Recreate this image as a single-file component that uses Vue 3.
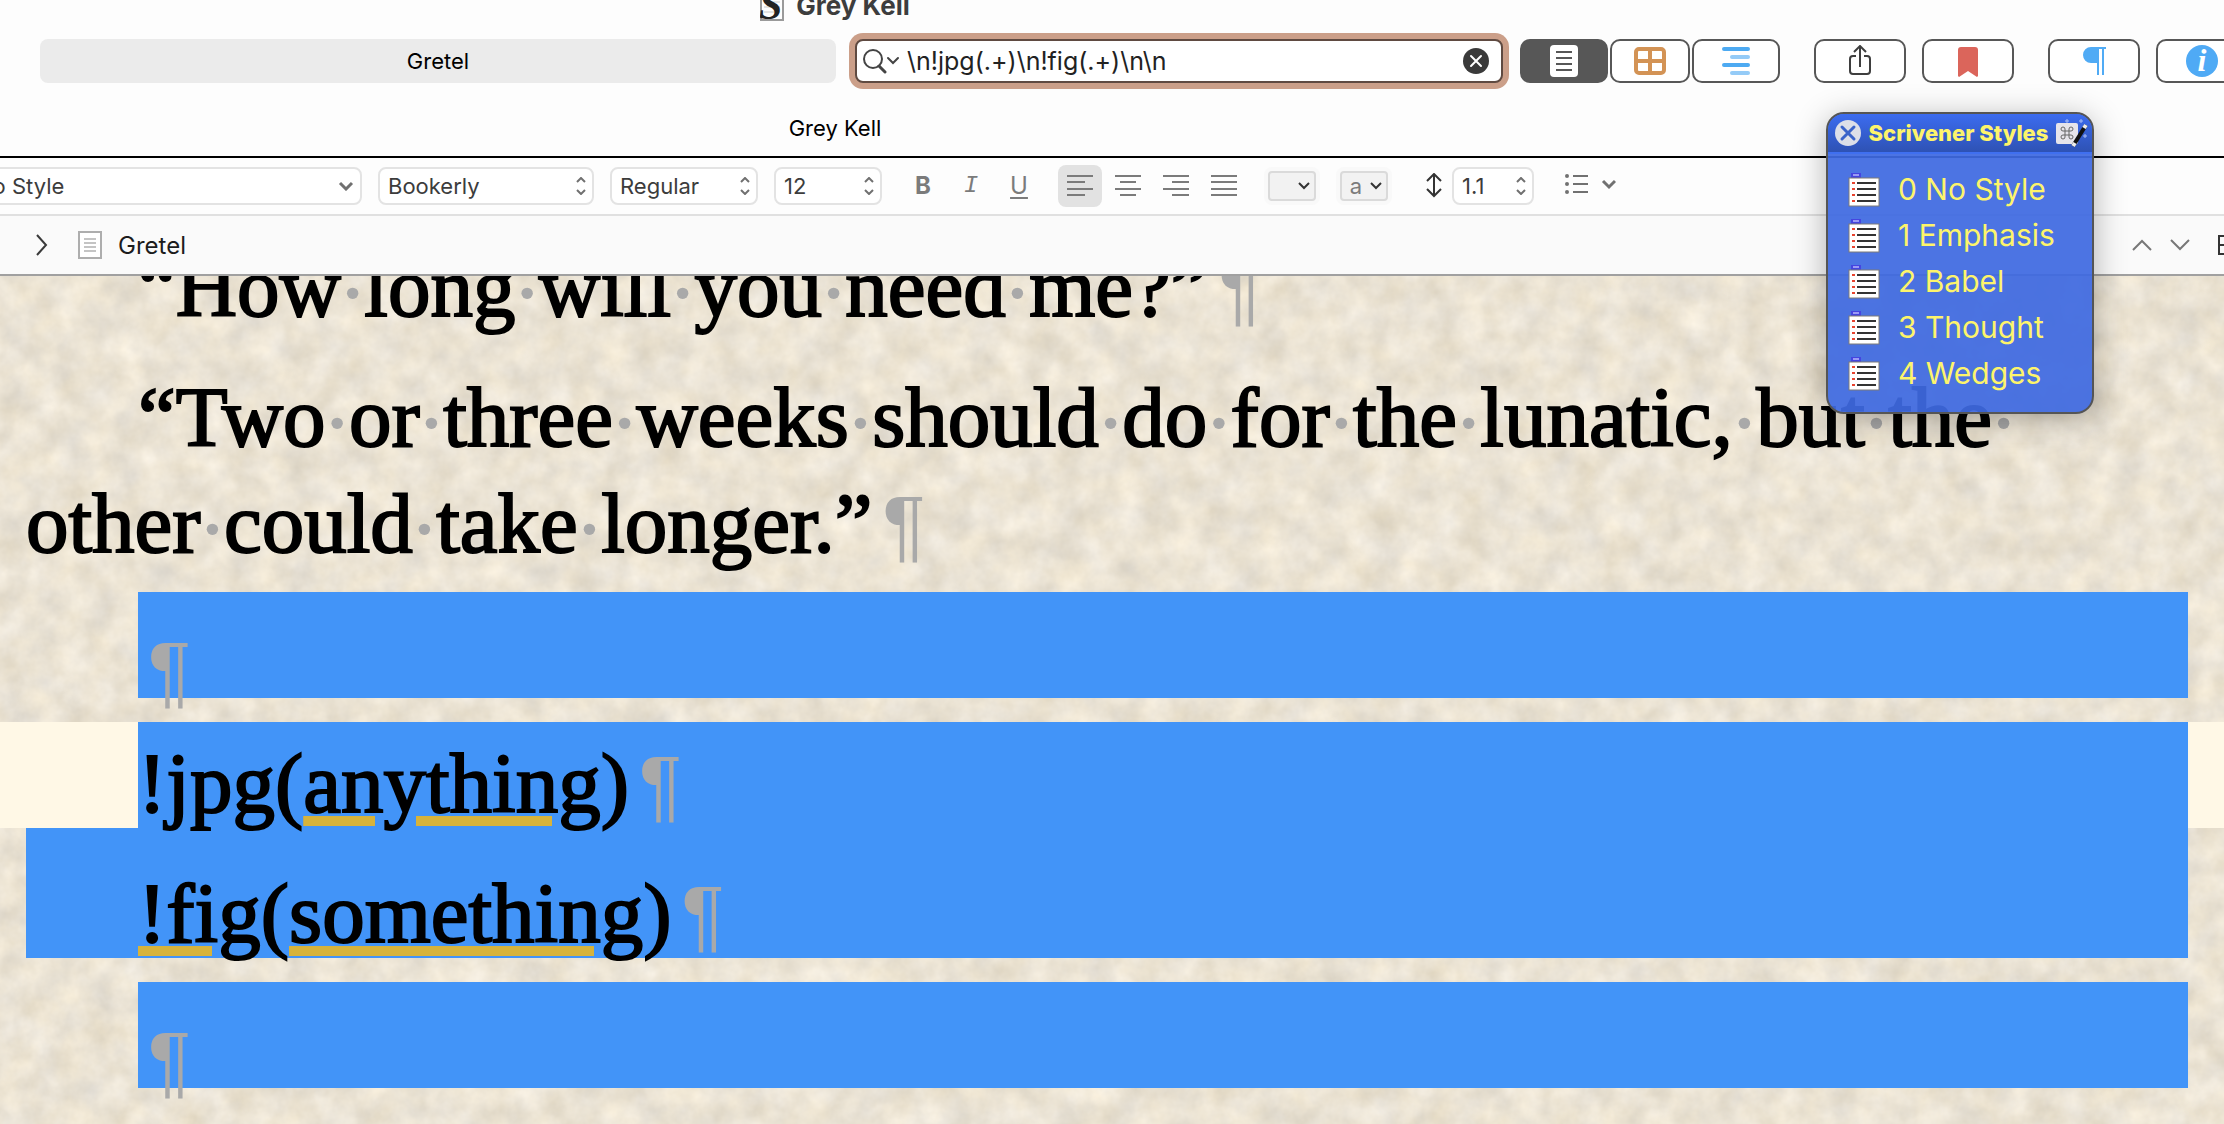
<template>
  <div class="window">
    <header class="title-bar">
      <svg class="app-icon" viewBox="0 0 24 32" aria-hidden="true">
        <rect x="1" y="1" width="22" height="30" fill="#fdfdfd" stroke="#9a9a9a" stroke-width="2" />
        <path d="M4 8h16M4 13h16M4 18h16M4 23h16" stroke="#c9c9c9" />
        <text x="-1" y="30" class="app-letter">S</text>
      </svg>
      <h1>Grey Kell</h1>
    </header>

    <div class="toolbar">
      <button class="tab">Gretel</button>
      <div class="search">
        <label for="search" aria-label="Search">
          <svg width="38" height="26" viewBox="0 0 38 26" fill="none" stroke="#444" stroke-linecap="round">
            <circle cx="10" cy="11" r="9" stroke-width="2" />
            <path d="M16 18l6 6" stroke-width="3" />
            <path d="M25 10l5 5 5-5" stroke-width="2" />
          </svg>
        </label>
        <input id="search" v-model="query" type="text" spellcheck="false" />
        <button class="clear" aria-label="Clear search" @click="query = ''">
          <svg width="26" height="26" viewBox="0 0 26 26">
            <circle cx="13" cy="13" r="13" fill="#3a3a3a" />
            <path d="M8 8l10 10M18 8L8 18" stroke="#fff" stroke-width="2" stroke-linecap="round" />
          </svg>
        </button>
      </div>
      <div class="segments">
        <button
          class="tool"
          :class="{ active: view === 'document' }"
          aria-label="Document view"
          @click="view = 'document'"
        >
          <svg width="32" height="32" viewBox="0 0 32 32">
            <rect x="2" width="28" height="32" rx="4" fill="#fff" />
            <path d="M8 7h16M8 13h16M8 19h16M8 25h16" stroke="#575757" stroke-width="2" />
          </svg>
        </button>
        <button
          class="tool narrow"
          :class="{ active: view === 'corkboard' }"
          aria-label="Corkboard"
          @click="view = 'corkboard'"
        >
          <svg width="32" height="32" viewBox="0 0 32 32" fill="none" stroke="#d39355" stroke-width="4">
            <rect x="2" y="4" width="28" height="24" rx="3" />
            <path d="M16 4v24M2 16h28" />
          </svg>
        </button>
        <button
          class="tool"
          :class="{ active: view === 'outliner' }"
          aria-label="Outliner"
          @click="view = 'outliner'"
        >
          <svg width="32" height="32" viewBox="0 0 32 32" stroke-width="4" stroke-linecap="round">
            <path d="M4 4h24M4 20h24" stroke="#4daaf2" />
            <path d="M12 12h16M12 28h16" stroke="#94cbf7" />
          </svg>
        </button>
      </div>
      <div class="tool-pair">
        <button class="tool wide" aria-label="Share">
          <svg width="32" height="32" viewBox="0 0 32 32" fill="none" stroke="#3e3e3e" stroke-width="2">
            <path d="M12 11H9q-3 0-3 3v12q0 3 3 3h14q3 0 3-3V14q0-3-3-3h-3" />
            <path d="M16 22V1M10 7l6-6 6 6" />
          </svg>
        </button>
        <button class="tool wide" aria-label="Bookmarks">
          <svg width="32" height="32" viewBox="0 0 32 32">
            <path d="M6 5q0-3 3-3h14q3 0 3 3v26l-1 1-9-6-9 6-1-1z" fill="#db655b" />
          </svg>
        </button>
      </div>
      <div class="tool-pair">
        <button class="tool wide" aria-label="Show invisibles">
          <svg width="32" height="32" viewBox="0 0 32 32">
            <path d="M13 2h15v2h-2v26h-2V4h-3v26h-2V18h-6a8 8 0 0 1 0-16z" fill="#50abf5" />
          </svg>
        </button>
        <button class="tool wide" aria-label="Inspector">
          <svg width="32" height="32" viewBox="0 0 32 32">
            <circle cx="16" cy="16" r="16" fill="#4faaf5" />
            <text x="16" y="26" class="info-letter">i</text>
          </svg>
        </button>
      </div>
    </div>

    <div class="project-title">Grey Kell</div>

    <div class="format-bar">
      <div class="pick style-pick">
        <select v-model="style" aria-label="Paragraph style">
          <option v-for="item in styles" :key="item.key">{{ item.name }}</option>
        </select>
        <svg width="16" height="10" viewBox="0 0 16 10"><path d="M2 2l6 6 6-6" /></svg>
      </div>
      <div v-for="pick in fontPicks" :key="pick.label" class="pick" :class="pick.size">
        <select :aria-label="pick.label">
          <option>{{ pick.value }}</option>
        </select>
        <svg width="10" height="18" viewBox="0 0 10 18"><path d="M1 5l4-4 4 4M1 13l4 4 4-4" /></svg>
      </div>

      <div class="letters">
        <button class="letter bold" aria-label="Bold">B</button>
        <button class="letter italic" aria-label="Italic">I</button>
        <button class="letter underline" aria-label="Underline">U</button>
      </div>

      <div class="aligns">
        <button
          v-for="item in aligns"
          :key="item.name"
          class="align"
          :class="{ active: align === item.name }"
          :aria-label="item.name"
          @click="align = item.name"
        >
          <svg width="26" height="24" viewBox="0 0 26 24">
            <path :d="item.path" stroke="#7b7b7b" stroke-width="2" />
          </svg>
        </button>
      </div>

      <div class="wells">
        <button class="well" aria-label="Text color">
          <svg width="12" height="8" viewBox="0 0 12 8"><path d="M1 1l5 5 5-5" /></svg>
        </button>
        <button class="well" aria-label="Highlight color">
          <span>a</span>
          <svg width="12" height="8" viewBox="0 0 12 8"><path d="M1 1l5 5 5-5" /></svg>
        </button>
      </div>

      <div class="spacing">
        <svg width="16" height="26" viewBox="0 0 16 26" fill="none" stroke="#333" stroke-width="2">
          <path d="M8 1v22M1 8l7-7 7 7M1 16l7 7 7-7" />
        </svg>
        <div class="pick spacing-pick">
          <select aria-label="Line spacing">
            <option>1.1</option>
          </select>
          <svg width="10" height="18" viewBox="0 0 10 18"><path d="M1 5l4-4 4 4M1 13l4 4 4-4" /></svg>
        </div>
      </div>

      <button class="list-button" aria-label="Lists">
        <svg width="52" height="24" viewBox="0 0 52 24" fill="none" stroke="#717171" stroke-width="2">
          <path d="M9 2h15M9 10h15M9 18h15" />
          <path d="M3 2h0M3 10h0M3 18h0" stroke-width="4" stroke-linecap="round" />
          <path d="M39 7l6 6 6-6" stroke-width="3" />
        </svg>
      </button>
    </div>

    <div class="path-bar">
      <button aria-label="Show path">
        <svg width="12" height="22" viewBox="0 0 12 22" fill="none" stroke="#3a3a3a" stroke-width="2">
          <path d="M1 1l9 10-9 10" />
        </svg>
      </button>
      <svg class="page-icon" width="24" height="28" viewBox="0 0 24 28">
        <rect x="1" y="1" width="22" height="26" fill="#fff" stroke="#adadad" stroke-width="2" />
        <path d="M6 8h12M6 12h12M6 16h12M6 20h12" stroke="#c4c4c4" stroke-width="2" />
      </svg>
      <h2>Gretel</h2>
      <div class="path-actions">
        <button aria-label="Previous document">
          <svg width="20" height="12" viewBox="0 0 20 12" fill="none" stroke="#777" stroke-width="2">
            <path d="M1 11l9-9 9 9" />
          </svg>
        </button>
        <button aria-label="Next document">
          <svg width="20" height="12" viewBox="0 0 20 12" fill="none" stroke="#777" stroke-width="2">
            <path d="M1 1l9 9 9-9" />
          </svg>
        </button>
        <button aria-label="Split editor">
          <svg width="24" height="20" viewBox="0 0 24 20" fill="none" stroke="#333" stroke-width="2">
            <path d="M1 1h22v18H1zM1 10h22" />
          </svg>
        </button>
      </div>
    </div>

    <main class="editor">
      <svg class="paper" aria-hidden="true">
        <filter id="grain" x="0" y="0" width="100%" height="100%" color-interpolation-filters="sRGB">
          <feTurbulence type="fractalNoise" baseFrequency="0.035" numOctaves="4" seed="12" />
          <feColorMatrix
            values="0.14 0.03 0 0 0.835
                    0.14 0.02 0.02 0 0.8
                    0.14 0 0.07 0 0.725
                    0 0 0 0 1"
          />
        </filter>
        <rect width="100%" height="100%" filter="url(#grain)" />
      </svg>

      <article class="page">
        <div
          v-for="(para, i) in paragraphs"
          :key="i"
          class="row"
          :class="{ current: para.current, joined: para.joined }"
        >
          <p :class="{ selected: para.selected, empty: !para.lines.length }">
            <template v-for="(line, n) in para.lines" :key="n">
              <br v-if="n" />
              <template v-for="(run, r) in line" :key="r">
                <span v-if="run.misspelt" class="misspelt">{{ run.text }}</span>
                <template v-else v-for="(part, k) in run.text.split(' ')" :key="k">
                  <span v-if="k" class="space">·</span>{{ part }}
                </template>
              </template>
            </template>
            <span class="pilcrow">¶</span>
          </p>
        </div>
      </article>
    </main>

    <aside class="palette">
      <div class="palette-head">
        <button aria-label="Close palette">
          <svg width="26" height="26" viewBox="0 0 26 26">
            <circle cx="13" cy="13" r="13" fill="#dcdfe8" />
            <path d="M7 7l12 12M19 7L7 19" stroke="#3a63c9" stroke-width="3" stroke-linecap="round" />
          </svg>
        </button>
        <strong>Scrivener Styles</strong>
        <svg width="32" height="30" viewBox="0 0 32 30">
          <rect y="5" width="22" height="21" rx="2" fill="#e6e4ea" />
          <path
            d="M9 13h4v4H9zM9 13H7a2 2 0 1 1 2-2zM13 13v-2a2 2 0 1 1 2 2zM13 17h2a2 2 0 1 1-2 2zM9 17v2a2 2 0 1 1-2-2z"
            fill="none"
            stroke="#666"
          />
          <path d="M17 28L30 7" stroke="#111" stroke-width="4" />
          <path d="M17 28l2-3M28 10l2-3" stroke="#eee" stroke-width="4" />
          <path d="M11 1v4M9 3h4M25 1v4M23 3h4M29 16v4M27 18h4" stroke="#a9bdf5" />
        </svg>
      </div>
      <ul>
        <li v-for="item in styles" :key="item.key">
          <button @click="style = item.name">
            <svg width="32" height="36" viewBox="0 0 32 36">
              <rect x="3" y="2" width="10" height="5" fill="#4545e0" />
              <path d="M5 4h6" stroke="#9a9af5" stroke-width="2" />
              <rect x="1" y="7" width="30" height="28" fill="#fff" stroke="#7d7a78" />
              <path d="M9 12h19M9 18h19M9 24h19M9 30h19" stroke="#333" stroke-width="2" />
              <path d="M4 12h3M4 18h3M4 24h3M4 30h3" stroke="#e8432e" stroke-width="2" />
            </svg>
            {{ item.key }} {{ item.name }}
          </button>
        </li>
      </ul>
    </aside>
  </div>
</template>

<script setup>
import { ref } from 'vue'

const query = ref('\\n!jpg(.+)\\n!fig(.+)\\n\\n')
const view = ref('document')
const style = ref('No Style')
const align = ref('Align left')

const styles = [
  { key: 0, name: 'No Style' },
  { key: 1, name: 'Emphasis' },
  { key: 2, name: 'Babel' },
  { key: 3, name: 'Thought' },
  { key: 4, name: 'Wedges' }
]

const fontPicks = [
  { label: 'Font family', value: 'Bookerly', size: 'family-pick' },
  { label: 'Typeface', value: 'Regular', size: 'face-pick' },
  { label: 'Font size', value: '12', size: 'size-pick' }
]

const aligns = [
  { name: 'Align left', path: 'M0 2h26M0 8h18M0 15h26M0 21h18' },
  { name: 'Align center', path: 'M0 2h26M5 8h16M0 15h26M5 21h16' },
  { name: 'Align right', path: 'M0 2h26M9 8h17M0 15h26M9 21h17' },
  { name: 'Justify', path: 'M0 2h26M0 8h26M0 15h26M0 21h26' }
]

const paragraphs = [
  { lines: [[{ text: '“How long will you need me?”' }]] },
  {
    lines: [
      [{ text: '“Two or three weeks should do for the lunatic, but the ' }],
      [{ text: 'other could take longer.”' }]
    ]
  },
  { lines: [], selected: true },
  {
    lines: [[{ text: '!jpg(' }, { text: 'anything', misspelt: true }, { text: ')' }]],
    selected: true,
    current: true
  },
  {
    lines: [
      [
        { text: '!fig', misspelt: true },
        { text: '(' },
        { text: 'something', misspelt: true },
        { text: ')' }
      ]
    ],
    selected: true,
    joined: true
  },
  { lines: [], selected: true }
]
</script>

<style>
body {
  margin: 0;
  background: #fdfdfd;
}
</style>

<style scoped>
.window {
  position: relative;
  display: flex;
  flex-direction: column;
  min-height: 100vh;
  overflow: hidden;
  background: #fdfdfd;
  color: #000;
  font-family: Inter, "Liberation Sans", sans-serif;
  font-size: 22px;
}

button {
  padding: 0;
  border: 0;
  background: none;
  color: inherit;
  font: inherit;
}

svg {
  display: block;
  flex: none;
}

/* Window title, partly above the top edge */
.title-bar {
  display: flex;
  align-items: center;
  justify-content: center;
  gap: 12px;
  height: 58px;
  margin-top: -24px;
  margin-left: -554px;
  color: #3d3d3d;
}

.title-bar h1 {
  margin: 0;
  font-size: 26px;
  font-weight: 700;
}

.app-icon {
  width: 24px;
  height: 32px;
}

.app-letter {
  font: italic bold 42px "Liberation Serif", serif;
  fill: #222;
}

.toolbar {
  display: flex;
  align-items: center;
  height: 54px;
  margin-right: -24px;
  padding-left: 40px;
}

.tab {
  flex: 796;
  height: 44px;
  margin-right: 19px;
  border-radius: 8px;
  background: #ebebeb;
}

.search {
  display: flex;
  flex: 626;
  align-items: center;
  box-sizing: border-box;
  height: 44px;
  margin-right: 17px;
  padding: 0 12px 0 6px;
  border: 2px solid #5f4a41;
  border-radius: 8px;
  background: #fff;
  box-shadow: 0 0 0 6px #cb9f89;
}

.search input {
  flex: 1;
  min-width: 0;
  padding: 0 6px;
  border: 0;
  outline: 0;
  background: none;
  color: #222;
  font: inherit;
  font-size: 25px;
}

.segments {
  display: flex;
  gap: 2px;
  margin-right: 34px;
}

.tool-pair {
  display: flex;
  gap: 16px;
}

.tool-pair + .tool-pair {
  margin-left: 34px;
}

.tool {
  display: flex;
  align-items: center;
  justify-content: center;
  box-sizing: border-box;
  width: 88px;
  height: 44px;
  border: 2px solid #575757;
  border-radius: 10px;
  background: #fff;
}

.tool.narrow {
  width: 80px;
}

.tool.wide {
  width: 92px;
}

.tool.active {
  background: #575757;
}

.info-letter {
  font: italic bold 32px "Liberation Serif", serif;
  fill: #fff;
  text-anchor: middle;
}

.project-title {
  margin-left: -554px;
  padding: 12px 0 0;
  border-bottom: 2px solid #000;
  line-height: 56px;
  text-align: center;
}

/* Format bar */
.format-bar {
  display: flex;
  align-items: center;
  height: 56px;
  margin-left: -34px;
  border-bottom: 2px solid #e0e0e0;
  color: #3c3c3c;
}

.pick {
  position: relative;
  height: 38px;
  margin-right: 16px;
}

.pick select {
  width: 100%;
  height: 100%;
  padding: 0 8px;
  border: 2px solid #e3e3e3;
  border-radius: 8px;
  background: #fff;
  color: inherit;
  font: inherit;
  appearance: none;
}

.pick svg {
  position: absolute;
  top: 50%;
  right: 8px;
  transform: translateY(-50%);
  fill: none;
  stroke: #707070;
  stroke-width: 2;
  pointer-events: none;
}

.style-pick {
  width: 396px;
}

.style-pick svg {
  stroke-width: 3;
}

.family-pick {
  width: 216px;
}

.face-pick {
  width: 148px;
}

.size-pick {
  width: 108px;
}

.letters {
  display: flex;
  margin-left: 1px;
}

.letter {
  width: 48px;
  color: #7b7b7b;
  font-size: 24px;
  line-height: 28px;
}

.letter.bold {
  font-weight: 700;
}

.letter.italic {
  font-family: "Liberation Mono", monospace;
  font-style: italic;
}

.letter.underline {
  text-decoration: underline;
  text-decoration-thickness: 2px;
  text-underline-offset: 3px;
}

.aligns {
  display: flex;
  gap: 4px;
  margin-left: 15px;
}

.align {
  display: flex;
  align-items: center;
  justify-content: center;
  width: 44px;
  height: 42px;
  border-radius: 8px;
}

.align.active {
  background: #e2e2e2;
}

.wells {
  display: flex;
  gap: 24px;
  margin-left: 22px;
}

.well {
  display: flex;
  align-items: center;
  justify-content: flex-end;
  gap: 8px;
  box-sizing: border-box;
  width: 48px;
  height: 30px;
  padding-right: 4px;
  border: 2px solid #dadada;
  border-radius: 4px;
  background: #f2f2f2;
  box-shadow: 0 0 0 4px #f9f9f9;
  color: #7b7b7b;
}

.well span {
  line-height: 26px;
}

.well svg {
  fill: none;
  stroke: #333;
  stroke-width: 2;
}

.spacing {
  display: flex;
  align-items: center;
  gap: 10px;
  margin-left: 38px;
}

.spacing-pick {
  width: 82px;
}

.list-button {
  margin-left: 14px;
}

/* Document path bar */
.path-bar {
  display: flex;
  align-items: center;
  height: 58px;
  padding-left: 36px;
  border-bottom: 2px solid #a0a0a0;
  background: #fafafa;
  color: #1c1c1c;
}

.page-icon {
  margin: 0 16px 0 30px;
}

.path-bar h2 {
  margin: 0;
  font-size: 24px;
  font-weight: 400;
}

.path-actions {
  display: flex;
  align-items: center;
  gap: 18px;
  margin-right: -18px;
  margin-left: auto;
}

.path-actions button:last-child {
  margin-left: 10px;
}

/* Editor */
.editor {
  position: relative;
  flex: 1;
  overflow: hidden;
  background: #e9e2d1;
}

.paper {
  position: absolute;
  width: 100%;
  height: 100%;
}

.page {
  position: relative;
  margin-top: -50px;
  font-family: "Liberation Serif", serif;
  font-size: 85px;
  line-height: 106px;
  -webkit-text-stroke: 2px;
}

.row {
  margin-bottom: 24px;
  padding: 0 36px 0 26px;
}

.row.current {
  background: #fff8e6;
}

p {
  margin: 0;
  padding-top: 8px;
  margin-bottom: -8px;
  text-indent: 112px;
}

p.selected {
  box-sizing: border-box;
  height: 106px;
  margin: 0 0 0 112px;
  background: #4294f8;
  text-indent: 0;
}

p.empty {
  padding-top: 24px;
}

.row.joined {
  margin-top: -24px;
}

.row.joined p {
  height: 130px;
  margin-left: 0;
  padding-top: 32px;
  text-indent: 112px;
}

.misspelt {
  text-decoration: underline #d7b33b;
  text-decoration-thickness: 10px;
  text-underline-offset: 4px;
}

.space,
.pilcrow {
  color: #a9a9a9;
  -webkit-text-stroke: 0;
}

.space {
  font-size: 70px;
  font-weight: 700;
  line-height: 1px;
}

.pilcrow {
  margin-left: 10px;
  font-family: "Liberation Sans", sans-serif;
  font-size: 80px;
  line-height: 1px;
}

/* Floating style palette */
.palette {
  position: absolute;
  top: 112px;
  right: 130px;
  box-sizing: border-box;
  width: 268px;
  overflow: hidden;
  border: 2px solid #555;
  border-radius: 18px;
  background: rgba(62, 105, 225, 0.93);
  box-shadow: 0 6px 32px rgba(0, 0, 0, 0.3);
  color: #fdf46b;
}

.palette-head {
  display: flex;
  align-items: center;
  justify-content: space-between;
  height: 38px;
  padding: 0 4px 0 7px;
  border-bottom: 2px solid #3f6ff0;
  background: linear-gradient(#3c6cf0, #2e52b4);
}

.palette-head strong {
  font-size: 22px;
  font-weight: 800;
}

.palette ul {
  margin: 0;
  padding: 12px 0 16px;
  list-style: none;
}

.palette li button {
  display: flex;
  align-items: center;
  gap: 18px;
  width: 100%;
  height: 46px;
  padding-left: 20px;
  font-size: 30px;
  text-align: left;
}
</style>
